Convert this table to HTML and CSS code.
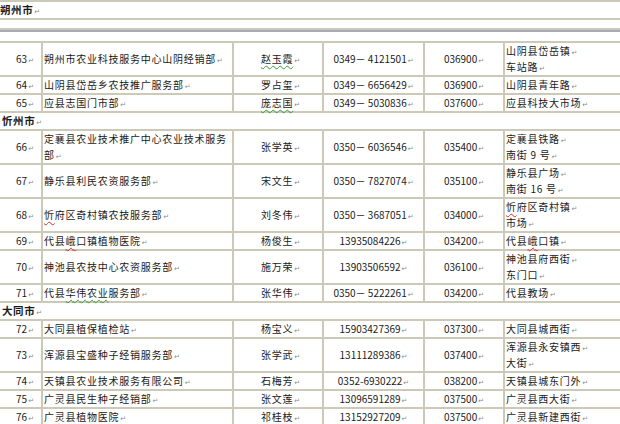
FILE: index.html
```html
<!DOCTYPE html>
<html lang="zh">
<head>
<meta charset="utf-8">
<title>农技服务网点</title>
<link rel="stylesheet" href="styles.css">
</head>
<body>
<table class="tbl head-tbl">
  <tr class="hdr"><td>朔州市<span class="pm">↵</span></td></tr>
  <tr class="blank"><td></td></tr>
</table>
<div class="pagebreak"></div>
<table class="tbl data">
  <colgroup><col class="c1"><col class="c2"><col class="c3"><col class="c4"><col class="c5"><col class="c6"></colgroup>
  <tr><td class="n">63<span class="pm">↵</span></td><td class="t">朔州市农业科技服务中心山阴经销部<span class="pm">↵</span></td><td class="p"><span class="g">赵玉霞</span><span class="pm">↵</span></td><td class="d">0349－ 4121501<span class="pm">↵</span></td><td class="d">036900<span class="pm">↵</span></td><td class="t">山阴县岱岳镇<span class="pm">↵</span><br>车站路<span class="pm">↵</span></td></tr>
  <tr><td class="n">64<span class="pm">↵</span></td><td class="t">山阴县岱岳乡农技推广服务部<span class="pm">↵</span></td><td class="p">罗占玺<span class="pm">↵</span></td><td class="d">0349－ 6656429<span class="pm">↵</span></td><td class="d">036900<span class="pm">↵</span></td><td class="t">山阴县青年路<span class="pm">↵</span></td></tr>
  <tr><td class="n">65<span class="pm">↵</span></td><td class="t">应县志国门市部<span class="pm">↵</span></td><td class="p"><span class="g">庞志国</span><span class="pm">↵</span></td><td class="d">0349－ 5030836<span class="pm">↵</span></td><td class="d">037600<span class="pm">↵</span></td><td class="t">应县科技大市场<span class="pm">↵</span></td></tr>
  <tr class="hdr"><td colspan="6">忻州市<span class="pm">↵</span></td></tr>
  <tr><td class="n">66<span class="pm">↵</span></td><td class="t">定襄县农业技术推广中心农业技术服务<br>部<span class="pm">↵</span></td><td class="p">张学英<span class="pm">↵</span></td><td class="d">0350－ 6036546<span class="pm">↵</span></td><td class="d">035400<span class="pm">↵</span></td><td class="t">定襄县铁路<span class="pm">↵</span><br>南街 9 号<span class="pm">↵</span></td></tr>
  <tr><td class="n">67<span class="pm">↵</span></td><td class="t">静乐县利民农资服务部<span class="pm">↵</span></td><td class="p">宋文生<span class="pm">↵</span></td><td class="d">0350－ 7827074<span class="pm">↵</span></td><td class="d">035100<span class="pm">↵</span></td><td class="t">静乐县广场<span class="pm">↵</span><br>南街 16 号<span class="pm">↵</span></td></tr>
  <tr><td class="n">68<span class="pm">↵</span></td><td class="t"><span class="r">忻</span>府区奇村镇农技服务部<span class="pm">↵</span></td><td class="p">刘冬伟<span class="pm">↵</span></td><td class="d">0350－ 3687051<span class="pm">↵</span></td><td class="d">034000<span class="pm">↵</span></td><td class="t"><span class="r">忻</span>府区奇村镇<span class="pm">↵</span><br>市场<span class="pm">↵</span></td></tr>
  <tr><td class="n">69<span class="pm">↵</span></td><td class="t">代县<span class="r">峨</span>口镇植物医院<span class="pm">↵</span></td><td class="p">杨俊生<span class="pm">↵</span></td><td class="d">13935084226<span class="pm">↵</span></td><td class="d">034200<span class="pm">↵</span></td><td class="t">代县<span class="r">峨</span>口镇<span class="pm">↵</span></td></tr>
  <tr><td class="n">70<span class="pm">↵</span></td><td class="t">神池县农技中心农资服务部<span class="pm">↵</span></td><td class="p">施万荣<span class="pm">↵</span></td><td class="d">13903506592<span class="pm">↵</span></td><td class="d">036100<span class="pm">↵</span></td><td class="t">神池县府西街<span class="pm">↵</span><br>东门口<span class="pm">↵</span></td></tr>
  <tr><td class="n">71<span class="pm">↵</span></td><td class="t">代县<span class="g">华伟农业</span>服务部<span class="pm">↵</span></td><td class="p">张华伟<span class="pm">↵</span></td><td class="d">0350－ 5222261<span class="pm">↵</span></td><td class="d">034200<span class="pm">↵</span></td><td class="t">代县教场<span class="pm">↵</span></td></tr>
  <tr class="hdr"><td colspan="6">大同市<span class="pm">↵</span></td></tr>
  <tr><td class="n">72<span class="pm">↵</span></td><td class="t">大同县植保植检站<span class="pm">↵</span></td><td class="p">杨宝义<span class="pm">↵</span></td><td class="d">15903427369<span class="pm">↵</span></td><td class="d">037300<span class="pm">↵</span></td><td class="t">大同县城西街<span class="pm">↵</span></td></tr>
  <tr><td class="n">73<span class="pm">↵</span></td><td class="t">浑源县宝盛种子经销服务部<span class="pm">↵</span></td><td class="p">张学武<span class="pm">↵</span></td><td class="d">13111289386<span class="pm">↵</span></td><td class="d">037400<span class="pm">↵</span></td><td class="t">浑源县永安镇西<span class="pm">↵</span><br>大街<span class="pm">↵</span></td></tr>
  <tr><td class="n">74<span class="pm">↵</span></td><td class="t">天镇县农业技术服务有限公司<span class="pm">↵</span></td><td class="p">石梅芳<span class="pm">↵</span></td><td class="d">0352-6930222<span class="pm">↵</span></td><td class="d">038200<span class="pm">↵</span></td><td class="t">天镇县城东门外<span class="pm">↵</span></td></tr>
  <tr><td class="n">75<span class="pm">↵</span></td><td class="t">广灵县民生种子经销部<span class="pm">↵</span></td><td class="p">张文莲<span class="pm">↵</span></td><td class="d">13096591289<span class="pm">↵</span></td><td class="d">037500<span class="pm">↵</span></td><td class="t">广灵县西大街<span class="pm">↵</span></td></tr>
  <tr><td class="n">76<span class="pm">↵</span></td><td class="t">广灵县植物医院<span class="pm">↵</span></td><td class="p">祁桂枝<span class="pm">↵</span></td><td class="d">13152927209<span class="pm">↵</span></td><td class="d">037500<span class="pm">↵</span></td><td class="t">广灵县<span class="g">新建</span>西街<span class="pm">↵</span></td></tr>
</table>
</body>
</html>
```
FILE: styles.css
```css
html, body {
  margin: 0;
  padding: 0;
  background: #fff;
  overflow: hidden;
}
body {
  width: 620px;
  height: 424px;
  font-family: "Noto Sans CJK SC", "Noto Sans", sans-serif;
  font-size: 10px;
  line-height: 16px;
  color: #1a1a1a;
}
.tbl {
  border-collapse: collapse;
  table-layout: fixed;
  width: 650px;
  margin-left: -2px;
}
.tbl td {
  border: 2px solid #cdc9b8;
  padding: 0 1px;
  height: 16px;
  line-height: 16px;
  vertical-align: middle;
  white-space: nowrap;
  letter-spacing: 0.75px;
}
.head-tbl td {
  border-left: none;
  border-right: none;
}
.hdr td {
  font-weight: bold;
  font-size: 10.5px;
  letter-spacing: 0.6px;
  padding-left: 2px;
  text-align: left;
}
.blank td {
  height: 8px;
  line-height: 8px;
}
.pagebreak {
  height: 9px;
  border-top: 2px solid #a5acb5;
}
.data td.n { text-align: right; padding-right: 7px; letter-spacing: 0; }
.data td.t { text-align: left; }
.data td.p { text-align: center; padding-left: 6px; }
.data td.d { text-align: center; letter-spacing: 0; }
.c1 { width: 43px; }
.c2 { width: 191px; }
.c3 { width: 90px; }
.c4 { width: 101px; }
.c5 { width: 80px; }
.c6 { width: 145px; }
.pm {
  font-family: "DejaVu Sans", sans-serif;
  font-size: 7px;
  line-height: 0;
  font-weight: normal;
  color: #8c8c8c;
  letter-spacing: 0;
  margin-left: 1px;
}
.g {
  text-decoration: underline wavy #3a9a3a;
  text-decoration-thickness: 1px;
  text-underline-offset: 2px;
}
.r {
  text-decoration: underline wavy #d03030;
  text-decoration-thickness: 1px;
  text-underline-offset: 2px;
}
```
